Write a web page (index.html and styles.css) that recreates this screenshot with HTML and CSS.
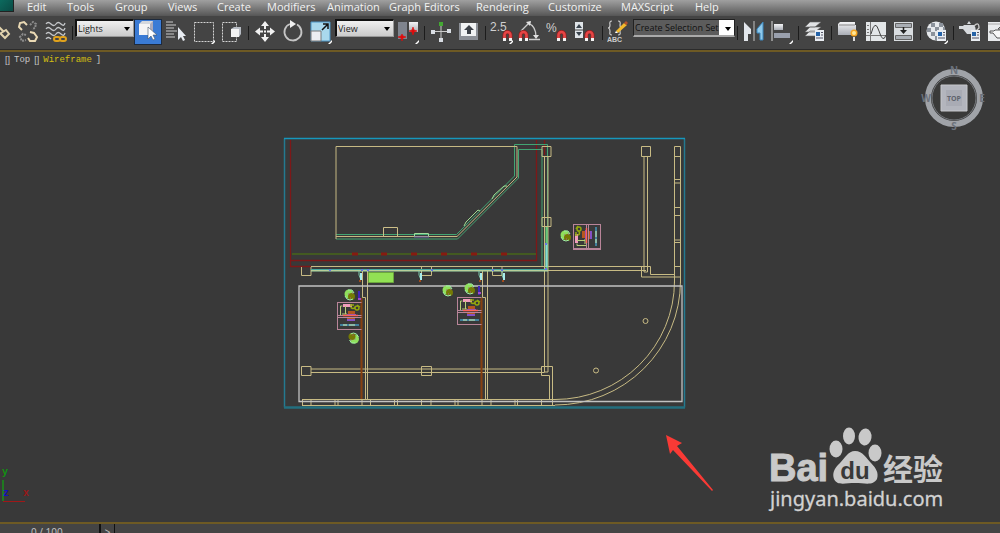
FILE: index.html
```html
<!DOCTYPE html>
<html lang="en">
<head>
    <meta charset="UTF-8">
    <meta name="viewport" content="width=device-width, initial-scale=1.0">
    <title>Top - Wireframe</title>
    <link rel="stylesheet" href="styles.css">
</head>
<body>
    <nav class="menu-bar">
        <span class="app-button"></span>
        <a href="#" class="menu-link">Edit</a>
        <a href="#" class="menu-link">Tools</a>
        <a href="#" class="menu-link">Group</a>
        <a href="#" class="menu-link">Views</a>
        <a href="#" class="menu-link">Create</a>
        <a href="#" class="menu-link">Modifiers</a>
        <a href="#" class="menu-link">Animation</a>
        <a href="#" class="menu-link">Graph Editors</a>
        <a href="#" class="menu-link">Rendering</a>
        <a href="#" class="menu-link">Customize</a>
        <a href="#" class="menu-link">MAXScript</a>
        <a href="#" class="menu-link">Help</a>
    </nav>

    <!-- shared shapes -->
    <svg class="defs" width="0" height="0" aria-hidden="true">
        <defs>
            <linearGradient id="metal" x1="0" y1="0" x2="0" y2="1">
                <stop offset="0" stop-color="#f4f4f6"/><stop offset="1" stop-color="#a9adb5"/>
            </linearGradient>
            <g id="magnet">
                <path d="M1.500 9V5a3 3 0 0 1 6 0V9" fill="none" stroke="#8e1f1f" stroke-width="4"/>
                <path d="M1.500 9V5a3 3 0 0 1 6 0V9" fill="none" stroke="#e64545" stroke-width="2.600"/>
                <path d="M0 8h3v3H0zM6 8h3v3H6z" fill="#f4f4f4"/>
            </g>
            <path id="corner" d="M19 24l4-4v2l-2 2z" fill="#fff"/>
            <g id="panel">
                <path d="M0 0h9v11H0z" fill="#e9edf2"/>
                <path d="M1 2h4v4H1z" fill="#2563a8"/>
                <path d="M6 2.500h2M6 5h2M1 8h7" stroke="#556" fill="none"/>
            </g>
            <g id="plant">
                <circle r="4.500" cx="-1" cy="-1" fill="#8fe05c"/>
                <circle r="3.500" cx="1.500" cy="1.500" fill="#757a05"/>
                <path d="M-5 1l2 3 3 1 3-1M-2-5l4 0 2 3" stroke="#9ff0a8" fill="none"/>
                <path d="M-2-1h1M2-2h1M0 3h1" stroke="#a85a9a" fill="none"/>
            </g>
            <g id="desk">
                <path d="M0 0.500H24.500M0.500 0V28M0 27.500H24.500M0 13.500H24.500M0 15.500H24.500" fill="none" stroke="#b98599"/>
                <path d="M6 2h9v3H6z" fill="#f29dbd"/>
                <path d="M3.500 13V4h2M5 12h5M8.500 4v8" stroke="#b8cf78" fill="none"/>
                <path d="M14 4.500a2 2 0 1 0 4 0M18 6a2 2 0 1 0 4 0 2 2 0 1 0-4 0M13 3h4M20 3l3 2" stroke="#93a80c" fill="none" stroke-width="1.500"/>
                <path d="M11 9h7v4h-7zM10 16h8v3h-8z" fill="#b5571f"/>
                <path d="M10 12h9v2h-9zM10 17h8v2h-8z" fill="#8450c4"/>
                <path d="M6 13.500h15" stroke="#ff6359" stroke-width="1.500"/>
                <path d="M3 23h19" stroke="#41809c" stroke-width="2"/>
                <path d="M6 23h4M12 23h6" stroke="#d5f0b0"/>
            </g>
            <g id="door">
                <path d="M-1 0v4l2 5" stroke="#7ec9ae" fill="none"/>
                <path d="M0 2h2v7H0z" fill="#a7ecec"/>
                <path d="M-1 9h2v2h-2z" fill="#a04a1c"/>
            </g>
        </defs>
    </svg>

    <div class="toolbar">
        <button class="tool" aria-label="Link"><svg viewBox="0 0 24 24"><path d="M11 7l5 5M13 13l5-3 3 4-4 4-4-4z" fill="none" stroke="#e2d3ad" stroke-width="2"/></svg></button>
        <button class="tool" aria-label="Unlink"><svg viewBox="0 0 24 24"><g fill="none" stroke-width="2"><path d="M6 10L3 7l1-4 4-1 3 3" stroke="#ead9b4"/><path d="M14 12l4 1 3 4-2 4-5 0-2-3" stroke="#ead9b4"/><path d="M14 5l3-3 3 2-1 4-3 1M10 15l-3-1-3 3 2 4 4-1" stroke="#8b8b8b" stroke-dasharray="2 1"/></g></svg></button>
        <button class="tool" aria-label="Bind to space warp"><svg viewBox="0 0 24 24"><g fill="none" stroke="#c4c6c9" stroke-width="1.300"><path d="M2 4q2-3 5 0t5 0 5 0 4-1"/><path d="M2 9q2-3 5 0t5 0 5 0 4-1"/><path d="M2 14q2-3 5 0t5 0 5 0 4-1"/><path d="M2 19q2-3 5 0"/></g><g fill="none" stroke="#e0a21d" stroke-width="2"><rect x="10" y="17" width="6" height="4" rx="2"/><rect x="16" y="17" width="6" height="4" rx="2"/></g></svg></button>
        <span class="separator"></span>
        <span class="dropdown"><select aria-label="Selection filter"><option>Lights</option></select></span>
        <button class="tool active" aria-label="Select object"><svg viewBox="0 0 24 24"><path d="M3 4l3-3h11v10l-3 4H3z" fill="#d4d8dd"/><path d="M3 4h11v11H3z" fill="#f5f5f5"/><path d="M14 4l3-3v10l-3 4z" fill="#aab"/><path d="M12 7v12l3-3 2 4 2-1-2-4h4z" fill="#fff" stroke="#456" stroke-width=".6"/></svg></button>
        <button class="tool" aria-label="Select by name"><svg viewBox="0 0 24 24"><path d="M2 2h7M2 5h10M2 8h8M2 11h11M2 14h8M2 17h9" stroke="#c9c9c9" stroke-width="1.200"/><path d="M14 7v13l3-3 2 4 2-1-2-4h3z" fill="#e8ecf2"/></svg></button>
        <button class="tool" aria-label="Rectangular selection region"><svg viewBox="0 0 24 24"><path d="M2.500 2.500h19v19h-19z" fill="none" stroke="#d4d4d4" stroke-dasharray="2 1"/><use href="#corner"/></svg></button>
        <button class="tool" aria-label="Window crossing"><svg viewBox="0 0 24 24"><path d="M2.500 2.500h14v19h-14z" fill="none" stroke="#d4d4d4" stroke-dasharray="2 1"/><path d="M11 9l3-2h7v7l-2 3h-8z" fill="#b7bcc4"/><path d="M11 9h8v8h-8z" fill="#f3f3f3"/></svg></button>
        <span class="separator"></span>
        <button class="tool" aria-label="Move"><svg viewBox="0 0 24 24"><g fill="#f2f2f2"><path d="M12 1l4 5H8zM12 22l4-5H8zM2 11.500l5-4v8zM22 11.500l-5-4v8z"/><path d="M11 6h2v3h-2zM11 14h2v3h-2zM7 10.500h3v2H7zM14 10.500h3v2h-3zM11 10.500h2v2h-2z"/></g></svg></button>
        <button class="tool" aria-label="Rotate"><svg viewBox="0 0 24 24"><path d="M16 4.500A8.500 8.500 0 1 1 9 4" fill="none" stroke="#c5c5c5" stroke-width="1.800"/><path d="M9 0l6 4-6 4z" fill="#f0f0f0"/></svg></button>
        <button class="tool" aria-label="Scale"><svg viewBox="0 0 24 24"><path d="M2 2h19v19H2z" fill="#a9d8ec" stroke="#4d94c4"/><path d="M2 11h10v10H2z" fill="#eceef2" stroke="#777"/><path d="M13 10l6-6M14 4h5v5" fill="none" stroke="#111" stroke-width="1.500"/><use href="#corner"/></svg></button>
        <span class="dropdown"><select aria-label="Reference coordinate system"><option>View</option></select></span>
        <button class="tool" aria-label="Use pivot point center"><svg viewBox="0 0 24 24"><path d="M2 2h9v17H2z" fill="#7f848e"/><path d="M13 2h9v10h-9z" fill="url(#metal)"/><path d="M6 14l1 2 3 1-3 1-1 3-1-3-3-1 3-1zM17 7l1 3 3 1-3 1-1 3-1-3-3-1 3-1z" fill="#e00a0a" stroke="#e00a0a" stroke-width=".6"/><use href="#corner"/></svg></button>
        <span class="separator"></span>
        <button class="tool" aria-label="Manipulate"><svg viewBox="0 0 24 24"><path d="M12 4v15M4 11.500h16" stroke="#ccc"/><path d="M10 2h4v4h-4z" fill="#43a832"/><path d="M2 10h4v4H2zM18 9h4v4h-4zM10 18h4v4h-4z" fill="#d9dde3"/></svg></button>
        <button class="tool" aria-label="Keyboard shortcut override"><svg viewBox="0 0 24 24"><path d="M2 3h19v17H2z" fill="#8c9097"/><path d="M4 3h15v13H4z" fill="#f1f3f4"/><path d="M12 5l5 5h-3v4h-4v-4H7z" fill="#3c4148"/></svg></button>
        <span class="separator"></span>
        <button class="tool" aria-label="Snaps toggle"><svg viewBox="0 0 24 24"><text x="0" y="11" class="icon-text">2.5</text><use href="#magnet" x="13" y="10"/><use href="#corner"/></svg></button>
        <button class="tool" aria-label="Angle snap"><svg viewBox="0 0 24 24"><path d="M3 11L12 2M10 3q8 3 8 14M11 19.500h11" fill="none" stroke="#ccc" stroke-width="1.300"/><path d="M8 2l5-1-1 5zM15 15h6l-3 4z" fill="#e2e2e2"/><use href="#magnet" x="1" y="10"/></svg></button>
        <button class="tool" aria-label="Percent snap"><svg viewBox="0 0 24 24"><text x="0" y="12" class="icon-text">%</text><use href="#magnet" x="11" y="10"/></svg></button>
        <button class="tool" aria-label="Spinner snap"><svg viewBox="0 0 24 24"><path d="M1 2h8v16H1z" fill="#dfe4e8"/><path d="M1 10h8" stroke="#444"/><path d="M5 4l3 4H2zM5 16l3-4H2z" fill="#38424c"/><use href="#magnet" x="11" y="10"/></svg></button>
        <span class="separator"></span>
        <button class="tool" aria-label="Edit named selection sets"><svg viewBox="0 0 24 24"><path d="M5 1q-3 0-2 4 0 3-2 3 2 0 2 4-1 3 2 3M11 1q3 0 2 4 0 3 2 3-2 0-2 4 1 3-2 3" fill="none" stroke="#ccc" stroke-width="1.200"/><path d="M9 11l8-8 3 2-9 8z" fill="#f2b92c"/><path d="M17 3l2-2 2 2-2 2z" fill="#b5522c"/><path d="M8 13l1-2 2 2z" fill="#fff"/><text x="0" y="22" class="icon-small">ABC</text></svg></button>
        <span class="dropdown selection-set"><select aria-label="Named selection sets"><option>Create Selection Set</option></select></span>
        <span class="separator"></span>
        <button class="tool" aria-label="Mirror"><svg viewBox="0 0 24 24"><path d="M2 2l7 7v5H6v7H2z" fill="#e3e7ec"/><path d="M12 1v20" stroke="#999" stroke-width="1.500"/><path d="M21 2l-6 7v4h3v7h3z" fill="#8fc9ea" stroke="#3b86bd"/></svg></button>
        <button class="tool" aria-label="Align"><svg viewBox="0 0 24 24"><path d="M2 1v20" stroke="#aaa" stroke-width="1.500"/><path d="M4 4h9v6H4z" fill="url(#metal)"/><path d="M4 13h16v5H4z" fill="#9aa0ad"/><use href="#corner"/></svg></button>
        <span class="separator"></span>
        <button class="tool" aria-label="Manage layers"><svg viewBox="0 0 24 24"><path d="M7 2h11l-6 5H2zM7 7h11l-6 5H2zM7 11h11l-6 5H2z" fill="#e2e4e6" stroke="#666" stroke-width=".6"/><use href="#panel" x="12" y="10"/></svg></button>
        <span class="separator"></span>
        <button class="tool" aria-label="Toggle ribbon"><svg viewBox="0 0 24 24"><path d="M2 4l2-2h15v3h1v10H2z" fill="url(#metal)"/><path d="M3 5h16" stroke="#888"/><circle cx="18" cy="13" r="3.500" fill="#f5a623"/><circle cx="18" cy="13" r="2" fill="#ffe89a"/><path d="M17 17h2v4h-2z" fill="#ddd"/></svg></button>
        <button class="tool" aria-label="Curve editor"><svg viewBox="0 0 24 24"><path d="M2 2h20v19H2z" fill="#e3e6e8"/><path d="M6.500 2v19M2 15.500h20M3 5.500h2M3 9.500h2M3 12.500h2" stroke="#777" fill="none"/><path d="M7 14q4-16 8-3t7 4" stroke="#444" fill="none"/></svg></button>
        <button class="tool" aria-label="Schematic view"><svg viewBox="0 0 24 24"><path d="M2 2h19v19H2z" fill="#d9dde0"/><path d="M3.500 3.500h16v4h-16zM3.500 15.500h16v4h-16z" fill="#a9aeb4" stroke="#666"/><path d="M11.500 7v5" stroke="#222" stroke-width="1.500"/><path d="M8 10h7l-3.500 4z" fill="#222"/></svg></button>
        <span class="separator"></span>
        <button class="tool" aria-label="Material editor"><svg viewBox="0 0 24 24"><circle cx="11" cy="11" r="9.500" fill="#e6e9ec"/><path d="M6 3h4v4H6zM14 3h4v4h-4zM10 7h4v4h-4zM2 8h4v4H2zM6 12h4v4H6zM14 11h4v4h-4zM10 16h4v4h-4zM18 7h2v4h-2z" fill="#8b929b"/><use href="#panel" x="12" y="10"/><use href="#corner"/></svg></button>
        <span class="separator"></span>
        <button class="tool" aria-label="Render setup"><svg viewBox="0 0 24 24"><path d="M6 5h10q4 5-1 9H9L5 9H1V6h4zM9 4l2-3 2 3z" fill="#d7dade"/><path d="M16 6q5-5 5 2l-4 4" fill="none" stroke="#ccc" stroke-width="1.300"/><use href="#panel" x="13" y="10"/></svg></button>
        <button class="tool" aria-label="Rendered frame window"><svg viewBox="0 0 24 24"><path d="M2 2h22v19H2z" fill="#e9ebed"/><path d="M2 4h22" stroke="#aaa"/><path d="M9 10h10q3 4-1 8h-7l-4-5H4v-2h4zM12 9l2-2 2 2z" fill="#f8f8f8" stroke="#555"/></svg></button>
    </div>

    <main class="viewport">
        <div class="viewport-label">
            <span class="brackets">[]</span><span>Top</span><span class="brackets">[]</span><span class="shading">Wireframe</span><span>]</span>
        </div>

        <svg class="drawing" width="410" height="280" viewBox="280 134 410 280" fill="none" stroke-width="1">
            <!-- outer boundary -->
            <path d="M284.500 138.500V407.500M684.500 138.500V407.500" stroke="#247a90" stroke-width="1.500"/>
            <path d="M284 138.500H685" stroke="#1697bd" stroke-width="1.500"/>
            <path d="M284 407.500H685" stroke="#236f7f" stroke-width="2.500"/>

            <!-- red guides -->
            <path d="M290.500 140V266.500H311M290.500 260.500H536.500V140M544.500 140V155" stroke="#7d1818" stroke-width="1.300"/>
            <path d="M292 254H536" stroke="#435a21" stroke-width="2"/>
            <path d="M352 254h6M381 254h6M411 254h6M441 254h6M471 254h6M501 254h6" stroke="#861c10" stroke-width="3"/>

            <!-- upper room -->
            <g stroke="#42a573">
                <path d="M336 234.500H456.500L514.500 176V144.500H547.500V270"/>
                <path d="M336 239H457.500L518.500 178V149.500H542V267"/>
            </g>
            <path d="M336 239V146.500H517V177L457 236.500H336" stroke="#c6b983"/>
            <path d="M464 226l2-4 12-12 2 1M492 199l2-4 10-9 3 0" stroke="#a1dc92"/>
            <path d="M383.500 227.500h14v9h-14z" stroke="#cdbf88"/>
            <path d="M414.500 237v-3.500h14v3.500" stroke="#a4db9b"/>
            <path d="M414 237h15" stroke="#7167b0"/>

            <!-- walls -->
            <g stroke="#c8bb84">
                <path d="M311 266.500H650.500V274.500H674.500M311 270.500H646"/>
                <path d="M641.500 267V277H681M644 156V272h3.500V156"/>
                <path d="M544.500 156V372M548 156V367"/>
                <path d="M542 146.500h9v10h-9zM542 217.500h9v9h-9zM641.500 146.500h9v10h-9z"/>
                <path d="M301.500 267v8.500h9.500v-8.500M421.500 267v8.500h10v-8.500M492.500 267v8.500h9.500v-8.500"/>
                <path d="M674.500 283V146.500H680.500V283M674 156.500h7M674 179.500h7M674 183h7M674 207.500h7M674 215.500h7M674 240h7M674 242.500h7M674 266.500h7"/>
                <path d="M674.500 281A119.500 118.500 0 0 1 555 399.500M680.500 281A125.500 124 0 0 1 555 405"/>
                <path d="M311 369H541M311 372.500H544.500"/>
                <path d="M301.500 366.500h9.500v9h-9.500zM421.500 366.500h10v9h-10z"/>
                <path d="M541.500 366.500H552.500V405M541.500 366.500V375.500H549.500V399M544 372h4v-6"/>
                <path d="M302 399.500H555M302 405.500H555"/>
                <path d="M302.500 400v5M311 400v5M335 400v5M338 400v5M362 400v5M370.500 400v5M394.500 400v5M397.500 400v5M421.500 400v5M431 400v5M455 400v5M458 400v5M482 400v5M491 400v5M515 400v5M517.500 400v5M541.500 400v5"/>
                <path d="M362.500 271V297.500H365.500V399M367.500 271V399M482.500 271V297.500H485.500V399M487.500 271V399"/>
            </g>
            <path d="M311 269.500H546" stroke="#45a9a0"/>
            <path d="M311 271H548" stroke="#a6e0ae"/>
            <path d="M546.500 227V270" stroke="#64c777" stroke-width="2"/>
            <path d="M546.500 244V267" stroke="#84d9d6" stroke-width="2"/>
            <path d="M329 270h2M361 270h2M367 270h2M431 270h2M492 270h2M501 270h2M545 244h2M545 269h2" stroke="#6675e0" stroke-width="2"/>
            <path d="M361.500 298V399M481.500 298V399" stroke="#87400f" stroke-width="2"/>
            <path d="M368.500 272.500h25v10h-25z" fill="#92e154" stroke="#6ba63c"/>

            <!-- crop window -->
            <path d="M299 286H682V401.500H299z" stroke="#c2c2c2" stroke-width="1.300"/>

            <circle cx="645.500" cy="321" r="2.500" stroke="#c8bb84"/>
            <circle cx="596" cy="370.500" r="2.500" stroke="#c8bb84"/>

            <!-- furniture -->
            <use href="#door" x="360" y="271"/>
            <use href="#door" x="420" y="271"/>
            <use href="#door" x="480" y="271"/>
            <use href="#door" x="503" y="271"/>
            <use href="#desk" x="337" y="302"/>
            <use href="#desk" x="457" y="297"/>
            <use href="#desk" transform="translate(573 249) rotate(-90)"/>
            <path d="M573 224.500h28M573 249.500h28" stroke="#b98599"/>
            <path d="M359 291v9M479 286v9" stroke="#3f25b8" stroke-width="2"/>
            <path d="M358 299h3M478 293h3" stroke="#a448c8" stroke-width="2"/>
            <use href="#plant" x="350" y="295"/>
            <use href="#plant" transform="translate(353.500 338) rotate(180)"/>
            <use href="#plant" x="448" y="291"/>
            <use href="#plant" x="470" y="289"/>
            <use href="#plant" x="566" y="236"/>
        </svg>

        <svg class="view-cube" width="68" height="68" viewBox="0 0 68 68">
            <circle cx="34" cy="34" r="26" fill="none" stroke="#a0a3a8" stroke-width="6"/>
            <circle cx="34" cy="34" r="22" fill="#3a3a39" stroke="#777a7e"/>
            <path d="M21 21h26v26H21z" fill="#b3b5bd" stroke="#c7c8cc"/>
            <path d="M26 26h16v16H26z" fill="#a9abb4"/>
            <text x="34" y="37" class="cube-face">TOP</text>
            <g class="cube-compass">
                <text x="34" y="10">N</text>
                <text x="6" y="38">W</text>
                <text x="62" y="38">E</text>
                <text x="34" y="66">S</text>
            </g>
        </svg>

        <svg class="arrow" width="50" height="60" viewBox="0 0 50 60">
            <path d="M1 1L17 9 12 12 48 56 47 57 8 16 5 20z" fill="#f93a35"/>
        </svg>

        <svg class="axis" width="36" height="40" viewBox="0 0 36 40">
            <path d="M3 14V35" stroke="#1f7a1f" stroke-width="2"/>
            <path d="M3 35.500H25" stroke="#a01818"/>
            <text x="2" y="9" fill="#119311">y</text>
            <text x="3" y="30" fill="#1212c0">z</text>
            <text x="23" y="30" fill="#9c1717">x</text>
        </svg>

        <svg class="watermark" width="190" height="96" viewBox="0 0 190 96">
            <text x="2" y="55" class="brand">Bai</text>
            <g fill="#c9c9c9">
                <ellipse cx="69" cy="23" rx="6.500" ry="8.500"/>
                <ellipse cx="82" cy="10" rx="6" ry="8.500"/>
                <ellipse cx="98" cy="11" rx="6.500" ry="8.500" transform="rotate(8 98 11)"/>
                <ellipse cx="108" cy="27" rx="6.500" ry="8.500"/>
                <path d="M88 25c-7 0-10 7-15 12-6 5-8 11-6 16 3 7 11 4 21 4s18 3 22-4c2-6-1-11-6-16-5-5-8-12-16-12z"/>
            </g>
            <text x="88" y="53" class="brand-du">du</text>
            <text x="116" y="54" class="brand-cn">经验</text>
            <text x="3" y="80" class="brand-url">jingyan.baidu.com</text>
        </svg>
    </main>

    <footer class="time-bar">
        <span class="time-frame">0 / 100</span>
        <button class="time-next">&gt;</button>
    </footer>
</body>
</html>
```
FILE: styles.css
```css
* {
    box-sizing: border-box;
}
body {
    margin: 0;
    height: 100vh;
    display: flex;
    flex-direction: column;
    overflow: hidden;
    background-color: #393939;
    font-family: "Open Sans", "Noto Sans", sans-serif;
    font-size: 11px;
}
button {
    padding: 0;
    border: 0;
    background: none;
    font-family: inherit;
}
.defs {
    position: absolute;
}

/* Menu bar */
.menu-bar {
    display: grid;
    grid-template-columns: 27px 40px 48px 53px 49px 50px 60px 62px 87px 72px 73px 74px auto;
    flex: none;
    height: 16px;
    background: linear-gradient(#a0a0a0, #565656);
    line-height: 14px;
}
.app-button {
    width: 14px;
    height: 12px;
    background: linear-gradient(135deg, #0c6a5e, #0a4a44);
    border-right: 1px solid #222;
    border-bottom: 1px solid #222;
}
.menu-link {
    color: #f2f2f2;
    text-decoration: none;
    white-space: nowrap;
}

/* Main toolbar */
.toolbar {
    display: flex;
    flex: none;
    align-items: flex-start;
    height: 34px;
    margin-left: -14px;
    padding-top: 3px;
    background-color: #444;
    border-bottom: 1px solid #2b2b2b;
}
.tool {
    display: flex;
    flex: none;
    align-items: center;
    justify-content: center;
    width: 28px;
    height: 26px;
    border: 1px solid transparent;
}
.tool svg {
    width: 24px;
    height: 24px;
}
.tool.active {
    background-color: #3a7bd5;
    border-color: #1d2a3d;
}
.separator {
    flex: none;
    width: 1px;
    height: 14px;
    margin: 7px 2px;
    background-color: #1c1c1c;
}
.icon-text {
    font-family: "Liberation Sans", sans-serif;
    font-size: 12px;
    fill: #d0d0d0;
}
.icon-small {
    font-family: "Liberation Sans", sans-serif;
    font-size: 7px;
    font-weight: bold;
    fill: #ccc;
}
.dropdown {
    position: relative;
    flex: none;
    width: 59px;
}
.dropdown select {
    display: block;
    width: 100%;
    height: 18px;
    padding: 0 14px 0 1px;
    appearance: none;
    color: #222;
    background: linear-gradient(#f0f0f0, #cbcbcb);
    border: 1px solid #999;
    border-top: 2px solid #111;
    border-left: 2px solid #111;
    border-radius: 0;
    font-family: inherit;
    font-size: 9px;
    line-height: 14px;
}
.dropdown::after {
    content: "";
    position: absolute;
    right: 4px;
    top: 8px;
    border: 3px solid transparent;
    border-top: 4px solid #000;
    border-bottom: 0;
    pointer-events: none;
}
.selection-set {
    width: 102px;
}
.selection-set select {
    color: #111;
    background: linear-gradient(to right, #5c5c5c 85px, #fff 85px);
    border: 1px solid #222;
    border-bottom: 2px solid #aaa;
}

/* Viewport */
.viewport {
    position: relative;
    flex: 1;
    border-top: 2px solid #6e5a24;
    border-bottom: 2px solid #6e5a24;
    background-color: #393939;
    overflow: hidden;
}
.viewport-label {
    display: flex;
    gap: 4px;
    padding: 2px 5px;
    color: #c6c6c6;
    font-family: "Liberation Mono", monospace;
    font-size: 9px;
    line-height: 12px;
}
.brackets {
    font-family: "Liberation Sans", sans-serif;
}
.shading {
    color: #d3bd12;
}
.drawing {
    position: absolute;
    left: 280px;
    top: 82px;
}
.view-cube {
    position: absolute;
    right: 12px;
    top: 12px;
}
.cube-face {
    font-size: 7px;
    font-weight: bold;
    text-anchor: middle;
    fill: #60646e;
}
.cube-compass {
    font-size: 10px;
    font-weight: bold;
    text-anchor: middle;
    fill: #6c727c;
}
.arrow {
    position: absolute;
    left: 665px;
    top: 382px;
}
.axis {
    position: absolute;
    left: 0;
    bottom: 16px;
    font-family: "Liberation Mono", monospace;
    font-size: 10px;
    font-weight: bold;
}
.watermark {
    position: absolute;
    right: 43px;
    bottom: 0;
}
.brand {
    font-family: "Liberation Sans", sans-serif;
    font-size: 38px;
    font-weight: bold;
    fill: #c9c9c9;
    stroke: #c9c9c9;
}
.brand-du {
    font-family: "Liberation Sans", sans-serif;
    font-size: 24px;
    font-weight: bold;
    text-anchor: middle;
    fill: #393939;
}
.brand-cn {
    font-family: "Noto Sans CJK SC", sans-serif;
    font-size: 30px;
    font-weight: bold;
    fill: #c9c9c9;
}
.brand-url {
    font-family: "Noto Sans", sans-serif;
    font-size: 20px;
    fill: #d2d2d2;
    stroke: #d2d2d2;
    stroke-width: 0.3px;
}

/* Time slider */
.time-bar {
    display: flex;
    flex: none;
    height: 9px;
    overflow: hidden;
    background-color: #444;
    color: #c4c4c4;
    font-size: 10px;
    line-height: 16px;
}
.time-frame {
    width: 101px;
    padding-left: 31px;
    border-right: 2px solid #111;
}
.time-next {
    width: 14px;
    height: 16px;
    color: #c4c4c4;
    border-right: 1px solid #111;
    font-size: 10px;
}
```
